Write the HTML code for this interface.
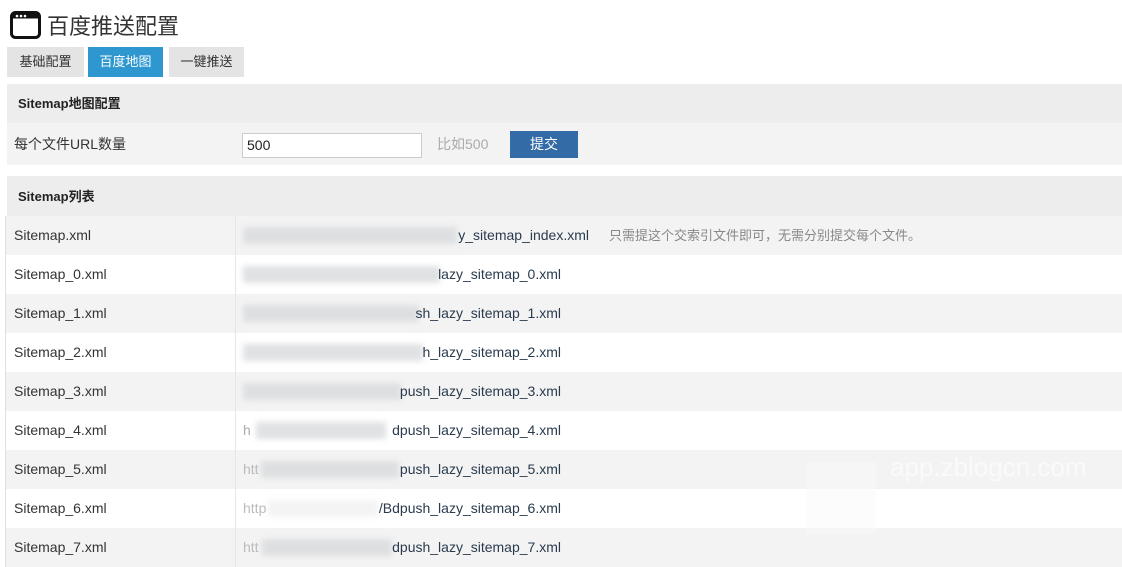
<!DOCTYPE html><html><head><meta charset="utf-8"><style>
*{margin:0;padding:0;box-sizing:border-box}
body{width:1122px;height:564px;overflow:hidden;background:#fff;font-family:"Liberation Sans","Noto Sans CJK SC",sans-serif;color:#333;position:relative}
.a{position:absolute}
.tab{position:absolute;top:47px;height:30px;line-height:30px;font-size:13px;text-align:center;background:#e4e4e4;color:#333}
.hd{position:absolute;left:7px;width:1115px;background:#ededed;font-size:13px;font-weight:bold;color:#222;padding-left:11px}
.row{position:absolute;left:5px;width:1117px;height:39px;line-height:39px;font-size:14px;border-left:1px solid #e0e0e0}
.row .n{position:absolute;left:8px;color:#333}
.row .d{position:absolute;left:229px;top:0;bottom:0;border-left:1px solid #e6e6e6}
.row .u{position:absolute;right:561px;color:#2a3b4d;white-space:nowrap}
.row .b{position:absolute;left:237px;top:11px;height:17px;background:#d8dadd;filter:blur(3px);opacity:.8}
.g{background:#f3f3f3}
</style></head><body>
<svg class="a" style="left:10px;top:11px" width="31" height="28" viewBox="0 0 31 28"><rect x="1.5" y="1.5" width="28" height="25" rx="4" fill="none" stroke="#111" stroke-width="3"/><rect x="1.5" y="1.5" width="28" height="6" fill="#111"/><circle cx="7" cy="5" r="1.3" fill="#fff"/><circle cx="11" cy="5" r="1.3" fill="#fff"/><circle cx="15" cy="5" r="1.3" fill="#fff"/></svg>
<div class="a" style="left:47px;top:9px;font-size:22px;color:#333">百度推送配置</div>
<div class="tab" style="left:7px;width:77px">基础配置</div>
<div class="tab" style="left:88px;width:75px;background:#2e97d0;color:#fff">百度地图</div>
<div class="tab" style="left:169px;width:75px">一键推送</div>
<div class="hd" style="top:84px;height:39px;line-height:39px">Sitemap地图配置</div>
<div class="a" style="left:7px;top:123px;width:1115px;height:42px;background:#f3f3f3"></div>
<div class="a" style="left:14px;top:123px;line-height:42px;font-size:14px">每个文件URL数量</div>
<div class="a" style="left:242px;top:133px;width:180px;height:25px;background:#fff;border:1px solid #ccc;font-size:14px;line-height:23px;padding-left:4px;color:#222">500</div>
<div class="a" style="left:437px;top:123px;line-height:42px;font-size:14px;color:#aaa">比如500</div>
<div class="a" style="left:510px;top:131px;width:68px;height:27px;background:#336ba6;color:#fff;font-size:14px;line-height:27px;text-align:center">提交</div>
<div class="hd" style="top:176px;height:40px;line-height:42px">Sitemap列表</div>
<div class="row g" style="top:216px"><span class="n">Sitemap.xml</span><span class="d"></span><span class="b" style="width:214px"></span><span class="u" style="right:533px">y_sitemap_index.xml</span><span class="a" style="left:603px;font-size:13px;color:#888">只需提这个交索引文件即可，无需分别提交每个文件。</span></div>
<div class="row" style="top:255px"><span class="n">Sitemap_0.xml</span><span class="d"></span><span class="b" style="width:197px"></span><span class="u">lazy_sitemap_0.xml</span></div>
<div class="row g" style="top:294px"><span class="n">Sitemap_1.xml</span><span class="d"></span><span class="b" style="width:176px"></span><span class="u">sh_lazy_sitemap_1.xml</span></div>
<div class="row" style="top:333px"><span class="n">Sitemap_2.xml</span><span class="d"></span><span class="b" style="width:180px"></span><span class="u">h_lazy_sitemap_2.xml</span></div>
<div class="row g" style="top:372px"><span class="n">Sitemap_3.xml</span><span class="d"></span><span class="b" style="width:158px"></span><span class="u">push_lazy_sitemap_3.xml</span></div>
<div class="row" style="top:411px"><span class="n">Sitemap_4.xml</span><span class="d"></span><span class="b" style="left:250px;width:130px"></span><span class="u">dpush_lazy_sitemap_4.xml</span><span class="a" style="left:237px;color:#aaa">h</span></div>
<div class="row g" style="top:450px"><span class="n">Sitemap_5.xml</span><span class="d"></span><span class="b" style="left:255px;width:138px"></span><span class="u">push_lazy_sitemap_5.xml</span><span class="a" style="left:237px;color:#bbb">htt</span></div>
<div class="row" style="top:489px"><span class="n">Sitemap_6.xml</span><span class="d"></span><span class="b" style="left:262px;width:110px;opacity:.3"></span><span class="u">/Bdpush_lazy_sitemap_6.xml</span><span class="a" style="left:237px;color:#bbb">http</span></div>
<div class="row g" style="top:528px"><span class="n">Sitemap_7.xml</span><span class="d"></span><span class="b" style="left:256px;width:130px"></span><span class="u">dpush_lazy_sitemap_7.xml</span><span class="a" style="left:237px;color:#bbb">htt</span></div>
<div class="a" style="left:806px;top:462px;width:70px;height:72px;background:#fafafa;opacity:.5"></div>
<div class="a" style="left:890px;top:452px;font-size:26px;color:#fff;opacity:.6">app.zblogcn.com</div>
</body></html>
